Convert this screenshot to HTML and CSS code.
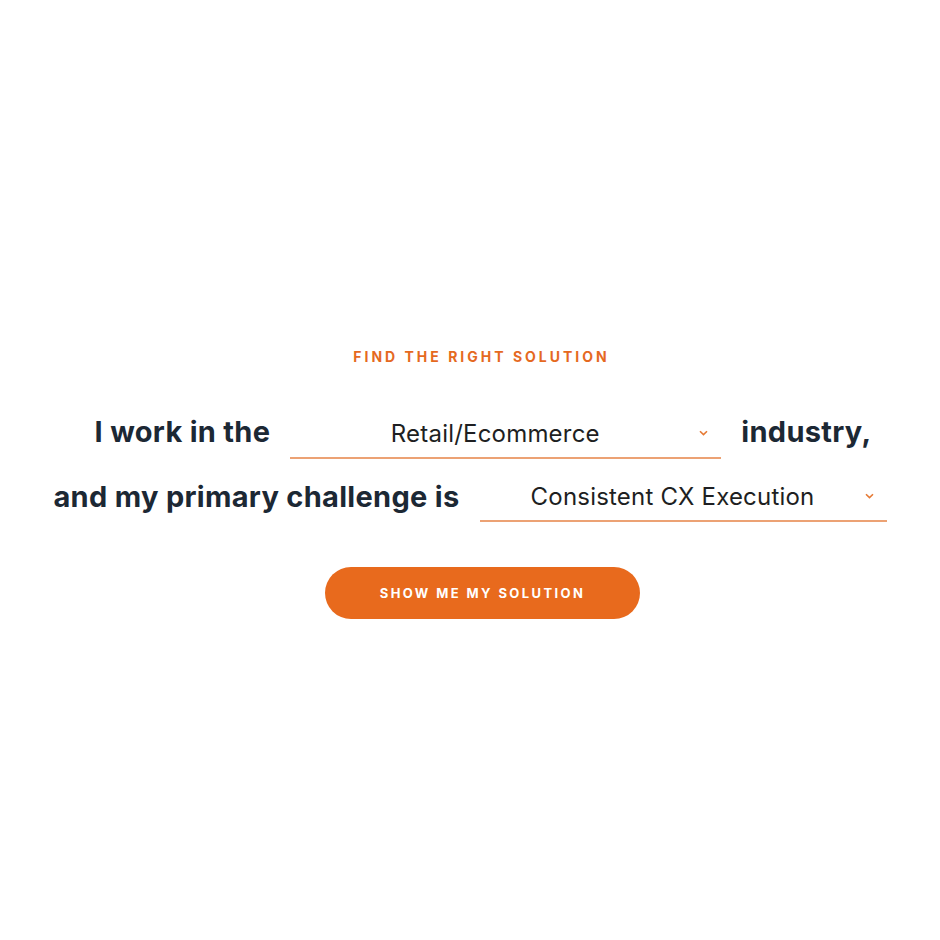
FILE: index.html
```html
<!DOCTYPE html>
<html lang="en">

<head>
    <meta charset="UTF-8">
    <meta name="viewport" content="width=device-width, initial-scale=1.0">
    <title>Find the right solution</title>
    <link rel="stylesheet" href="styles.css">
</head>

<body>
    <div id="solution-finder">
        <div class="eyebrow">FIND THE RIGHT SOLUTION</div>
        <form class="finder-form">
            <div class="finder-row row-industry">
                <span class="label">I work in the</span>
                <div class="select-box box-industry">
                    <select name="industry">
                        <option>Retail/Ecommerce</option>
                        <option>Financial Services</option>
                        <option>Healthcare</option>
                        <option>Technology</option>
                    </select>
                    <svg class="chevron" width="9" height="6" viewBox="0 0 9 6">
                        <path d="M1 1.2 L4.5 4.6 L8 1.2" fill="none" stroke="#e67a35" stroke-width="1.6" />
                    </svg>
                </div>
                <span class="label">industry,</span>
            </div>
            <div class="finder-row row-challenge">
                <span class="label">and my primary challenge is</span>
                <div class="select-box box-challenge">
                    <select name="challenge">
                        <option>Consistent CX Execution</option>
                        <option>Customer Retention</option>
                        <option>Employee Engagement</option>
                    </select>
                    <svg class="chevron" width="9" height="6" viewBox="0 0 9 6">
                        <path d="M1 1.2 L4.5 4.6 L8 1.2" fill="none" stroke="#e67a35" stroke-width="1.6" />
                    </svg>
                </div>
            </div>
            <button type="button" id="show-solution">SHOW ME MY SOLUTION</button>
        </form>
    </div>
</body>

</html>
```

FILE: styles.css
```css
body {
    margin: 0;
    background-color: #fff;
    font-family: "Inter", "Liberation Sans", sans-serif;
    color: #1c2834;
}

#solution-finder {
    display: flex;
    flex-direction: column;
    align-items: center;
    padding-top: 348px;
}

.eyebrow {
    margin-left: 23px;
    font-size: 14px;
    font-weight: 700;
    letter-spacing: 3px;
    color: #e5691f;
}

.finder-form {
    display: flex;
    flex-direction: column;
    align-items: center;
    width: 100%;
}

.finder-row {
    display: flex;
    align-items: flex-end;
    justify-content: center;
    gap: 20px;
    width: 100%;
}

.row-industry {
    margin-top: 45px;
    padding-left: 26px;
    box-sizing: border-box;
}

.row-challenge {
    margin-top: 14px;
}

.label {
    font-size: 29px;
    font-weight: 700;
    letter-spacing: 0.3px;
    line-height: 40px;
    padding-bottom: 7px;
}

.row-challenge .label {
    padding-bottom: 5px;
}

.select-box {
    position: relative;
    border-bottom: 2px solid #eca274;
}

.box-industry {
    width: 431px;
}

.box-challenge {
    width: 407px;
}

select {
    appearance: none;
    -webkit-appearance: none;
    width: 100%;
    height: 47px;
    padding: 0 21px 0 0;
    border: none;
    background: transparent;
    font-family: "Inter", "Liberation Sans", sans-serif;
    font-size: 24px;
    letter-spacing: 0.2px;
    color: #1e1f22;
    text-align: center;
    text-align-last: center;
    outline: none;
}

.chevron {
    position: absolute;
    right: 13px;
    top: 20px;
    pointer-events: none;
}

#show-solution {
    margin-top: 45px;
    margin-left: 25px;
    width: 315px;
    height: 52px;
    border: none;
    border-radius: 26px;
    background-color: #e86a1d;
    color: #fff;
    font-family: "Inter", "Liberation Sans", sans-serif;
    font-size: 13px;
    font-weight: 700;
    letter-spacing: 2.4px;
}
```
